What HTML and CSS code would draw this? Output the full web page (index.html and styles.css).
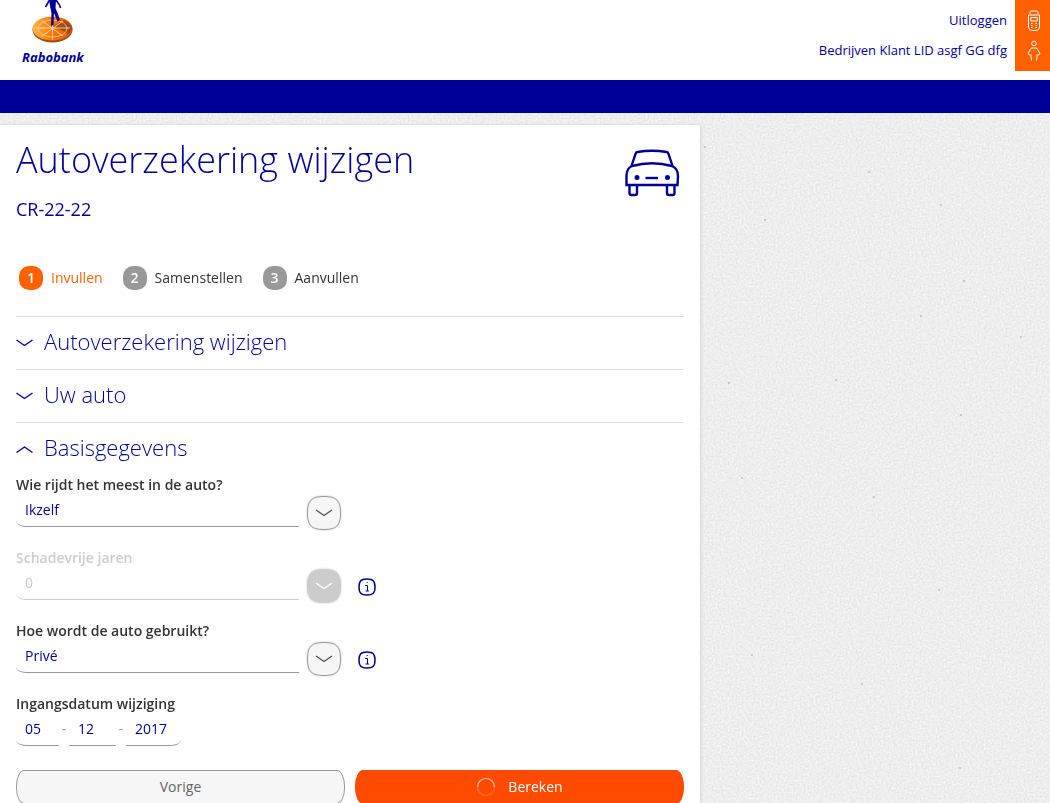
FILE: index.html
```html
<!DOCTYPE html>
<html lang="nl">
<head>
<meta charset="utf-8">
<meta name="viewport" content="width=device-width, initial-scale=1">
<title>Autoverzekering wijzigen - Rabobank</title>
<link rel="stylesheet" href="styles.css">
</head>
<body>
<svg class="paper" aria-hidden="true">
  <filter id="grain" x="0" y="0" width="100%" height="100%" color-interpolation-filters="sRGB">
    <feTurbulence type="fractalNoise" baseFrequency="0.5" numOctaves="3" seed="4"/>
    <feColorMatrix values="0.12 0 0 0 0.873  0.12 0 0 0 0.873  0.12 0 0 0 0.873  0 0 0 0 1"/>
  </filter>
  <rect width="100%" height="100%" filter="url(#grain)"/>
  <g class="specks">
    <circle cx="705" cy="147" r="1"/><circle cx="869" cy="172" r="1"/><circle cx="941" cy="205" r="1"/><circle cx="765" cy="220" r="1"/><circle cx="964" cy="281" r="1"/><circle cx="1021" cy="337" r="1"/><circle cx="921" cy="316" r="1"/><circle cx="729" cy="383" r="1"/><circle cx="836" cy="380" r="1"/><circle cx="961" cy="415" r="1"/><circle cx="742" cy="478" r="1"/><circle cx="874" cy="497" r="1"/><circle cx="939" cy="590" r="1"/><circle cx="862" cy="684" r="1"/><circle cx="960" cy="768" r="1"/><circle cx="752" cy="655" r="1"/>
  </g>
</svg>

<header class="header">
  <a class="logo" href="#" aria-label="Rabobank">
    <svg class="logo-mark" viewBox="0 0 42 44" aria-hidden="true">
      <defs><linearGradient id="disc"><stop offset="0" stop-color="#ffb84d"/><stop offset=".45" stop-color="#ff7a00"/><stop offset="1" stop-color="#d95a10"/></linearGradient></defs>
      <ellipse cx="20.500" cy="30" rx="20" ry="12.500" fill="#a04a18"/>
      <ellipse cx="20.500" cy="28.500" rx="20" ry="12" fill="url(#disc)"/>
      <path d="M21 26L32 20Q40 24 40 29L37 34Z" fill="#8a3d14" opacity=".7"/>
      <ellipse cx="20.500" cy="28.500" rx="14.500" ry="8.500" fill="none" stroke="#ffe0b0" stroke-width=".7"/>
      <path d="M20.500 17V40M4 28H38M10 21L31 36M31 21L10 36" stroke="#ffe6c4" stroke-width=".8"/>
      <path d="M17 0H24L23.500 8L26 14L28 20L25.500 21.500L22 13L21.500 25L19 26L19.500 13L18 6Z" fill="#009"/>
      <path d="M17.500 0L13.500 7M24 0L27.500 5L28.500 8" fill="none" stroke="#009" stroke-width="1.600"/>
    </svg>
    <span class="logo-name">Rabobank</span>
  </a>
  <div class="account">
    <nav class="account-links" aria-label="Account">
      <a href="#">Uitloggen</a>
      <a href="#">Bedrijven Klant LID asgf GG dfg</a>
    </nav>
    <div class="account-icons">
      <svg viewBox="0 0 14 22" aria-hidden="true"><path d="M3 4V2.500Q3 1 4.500 1H9.500Q11 1 11 2.500V4M1.500 5H12.500V17Q12.500 20.500 9 20.500H5Q1.500 20.500 1.500 17ZM3.800 7.500H10.200V11H3.800Z"/><path d="M4 13.500H5.600M8.400 13.500H10M4 15.500H5.600M8.400 15.500H10M4 17.500H5.600M8.400 17.500H10"/></svg>
      <svg viewBox="0 0 14 22" aria-hidden="true"><circle cx="7" cy="3.500" r="2.300"/><path d="M3.500 15H2.300L1.200 13.500L3.300 9.500Q3.900 8 5 8H9Q10.100 8 10.700 9.500L12.800 13.500L11.700 15H10.500M4 14.500V17L4.500 20.500M10 14.500V17L9.500 20.500"/></svg>
    </div>
  </div>
</header>
<div class="navbar"></div>

<main class="panel">
  <div class="title-row">
    <div>
      <h1>Autoverzekering wijzigen</h1>
      <p class="policy">CR-22-22</p>
    </div>
    <svg class="car" viewBox="0 0 56 48" aria-hidden="true">
      <path d="M7.500 17L11.500 4.800Q12 3.300 13.500 3Q28 .5 42.500 3Q44 3.300 44.500 4.800L48.500 17"/>
      <path d="M2.500 36V27Q2.500 19.500 8 17Q28 11.500 48 17Q54 19.500 54 27L53.500 36Z"/>
      <path d="M5.500 36V44Q5.500 46 7.500 46H11Q13 46 13 44V36M43 36V44Q43 46 45 46H48.500Q50.500 46 50.500 44V36"/>
      <path d="M21.500 29H34"/>
      <circle cx="13" cy="28.500" r="2.500"/><circle cx="43.500" cy="28.500" r="2.500"/>
    </svg>
  </div>

  <ol class="steps">
    <li class="step active"><span class="badge">1</span>Invullen</li>
    <li class="step"><span class="badge">2</span>Samenstellen</li>
    <li class="step"><span class="badge">3</span>Aanvullen</li>
  </ol>

  <h2><button class="section" type="button" aria-expanded="false"><svg class="chevron" viewBox="0 0 17 10" aria-hidden="true"><path d="M.5 2L8.500 7.500L16.500 2"/></svg><span>Autoverzekering wijzigen</span></button></h2>
  <h2><button class="section" type="button" aria-expanded="false"><svg class="chevron" viewBox="0 0 17 10" aria-hidden="true"><path d="M.5 2L8.500 7.500L16.500 2"/></svg><span>Uw auto</span></button></h2>
  <h2><button class="section" type="button" aria-expanded="true"><svg class="chevron" viewBox="0 0 17 10" aria-hidden="true"><path d="M.5 8.500L8.500 3L16.500 8.500"/></svg><span>Basisgegevens</span></button></h2>

  <form class="form">
    <div class="field">
      <label for="driver">Wie rijdt het meest in de auto?</label>
      <div class="control">
        <select id="driver"><option>Ikzelf</option></select>
        <button class="drop" type="button" aria-label="Toon opties"><svg viewBox="0 0 36 36" aria-hidden="true"><path class="face" d="M18 1.500C30.500 1.500 34.500 5.500 34.500 18S30.500 34.500 18 34.500S1.500 30.500 1.500 18S5.500 1.500 18 1.500Z"/><path class="mark" d="M10 15L18 20.500L26 15"/></svg></button>
      </div>
    </div>
    <div class="field disabled">
      <label for="years">Schadevrije jaren</label>
      <div class="control">
        <select id="years" disabled><option>0</option></select>
        <button class="drop" type="button" aria-label="Toon opties" disabled><svg viewBox="0 0 36 36" aria-hidden="true"><path class="face" d="M18 1.500C30.500 1.500 34.500 5.500 34.500 18S30.500 34.500 18 34.500S1.500 30.500 1.500 18S5.500 1.500 18 1.500Z"/><path class="mark" d="M10 15L18 20.500L26 15"/></svg></button>
        <button class="info" type="button" aria-label="Informatie"><svg viewBox="0 0 18 18" aria-hidden="true"><path class="ring" d="M9 1C15 1 17 3 17 9S15 17 9 17S1 15 1 9S3 1 9 1Z"/><path d="M7 7.500H9.500V13M7.500 13H11M8.700 4.500H9.700"/></svg></button>
      </div>
    </div>
    <div class="field">
      <label for="usage">Hoe wordt de auto gebruikt?</label>
      <div class="control">
        <select id="usage"><option>Privé</option></select>
        <button class="drop" type="button" aria-label="Toon opties"><svg viewBox="0 0 36 36" aria-hidden="true"><path class="face" d="M18 1.500C30.500 1.500 34.500 5.500 34.500 18S30.500 34.500 18 34.500S1.500 30.500 1.500 18S5.500 1.500 18 1.500Z"/><path class="mark" d="M10 15L18 20.500L26 15"/></svg></button>
        <button class="info" type="button" aria-label="Informatie"><svg viewBox="0 0 18 18" aria-hidden="true"><path class="ring" d="M9 1C15 1 17 3 17 9S15 17 9 17S1 15 1 9S3 1 9 1Z"/><path d="M7 7.500H9.500V13M7.500 13H11M8.700 4.500H9.700"/></svg></button>
      </div>
    </div>
    <div class="field">
      <label for="day">Ingangsdatum wijziging</label>
      <div class="date">
        <input class="day" id="day" value="05"><span class="dash">-</span>
        <input class="month" aria-label="Maand" value="12"><span class="dash">-</span>
        <input class="year" aria-label="Jaar" value="2017">
      </div>
    </div>
    <div class="actions">
      <button class="action" type="button">Vorige</button>
      <button class="action primary" type="submit"><svg class="spinner" viewBox="0 0 20 20" aria-hidden="true"><circle cx="10" cy="10" r="8.500" opacity=".3"/><path d="M1.500 10A8.500 8.500 0 0 1 18.500 10"/></svg>Bereken</button>
    </div>
  </form>
</main>
</body>
</html>
```
FILE: styles.css
```css
* { box-sizing: border-box; }

body {
  margin: 0;
  background: #eee;
  color: #333;
  font: 14px/20px "Open Sans", "Noto Sans", sans-serif;
}

button, input, select { font: inherit; }
a { color: #009; text-decoration: none; }

.paper {
  position: fixed;
  inset: 0;
  z-index: -1;
  width: 100%;
  height: 100%;
}
.specks { fill: #999; opacity: .6; }

.header {
  display: flex;
  justify-content: space-between;
  height: 80px;
  background: #fff;
}
.logo {
  display: flex;
  flex-direction: column;
  align-items: center;
  margin-left: 22px;
}
.logo-mark { width: 42px; height: 44px; }
.logo-name {
  margin-top: 4px;
  font: italic bold 13px/18px "Open Sans", sans-serif;
}
.account { display: flex; gap: 8px; }
.account-links {
  display: flex;
  flex-direction: column;
  gap: 10px;
  padding-top: 10px;
  font-size: 13px;
  text-align: right;
}
.account-icons {
  display: flex;
  flex-direction: column;
  align-items: center;
  gap: 8px;
  width: 35px;
  height: 71px;
  padding: 10px 0 0 3px;
  background: #ff6000;
}
.account-icons svg {
  width: 14px;
  height: 22px;
  fill: none;
  stroke: #fff;
}

.navbar { height: 33px; background: #009; }

.panel {
  width: 66.667%;
  margin-top: 12px;
  padding: 12px 16px 16px;
  background: #fff;
  box-shadow: 1px 0 3px #d4d4d4;
}
.title-row { display: flex; justify-content: space-between; }
h1 {
  margin: 0;
  color: #009;
  font: 300 36px/45px "Open Sans", sans-serif;
}
.policy {
  margin: 15px 0 0;
  color: #009;
  font-size: 18px;
  line-height: 24px;
}
.car {
  width: 56px;
  height: 48px;
  margin: 12px 4px 0 0;
  fill: none;
  stroke: #009;
  stroke-width: 2.4;
}
.car circle { fill: #009; stroke: none; }

.steps {
  display: flex;
  gap: 20px;
  margin: 45px 0 26px;
  padding: 0 0 0 3px;
  list-style: none;
}
.step { display: flex; align-items: center; gap: 8px; }
.badge {
  width: 24px;
  height: 24px;
  border-radius: 10px;
  background: #999;
  color: #fff;
  font-weight: 600;
  line-height: 24px;
  text-align: center;
}
.active { color: #ff6000; }
.active .badge { background: #ff6000; }

h2 { margin: 0; border-top: 1px solid #ddd; }
.section {
  display: flex;
  align-items: center;
  gap: 11px;
  width: 100%;
  height: 52px;
  padding: 0;
  border: 0;
  background: none;
  color: #009;
  font-size: 22px;
  font-weight: 300;
}
.section span { padding-bottom: 4px; }
.chevron {
  width: 17px;
  height: 10px;
  fill: none;
  stroke: currentColor;
  stroke-width: 1.4;
}

.field { height: 73px; }
label { display: block; font-weight: 600; }
.control { display: flex; }
select, input {
  height: 32px;
  padding: 0 9px 2px;
  border: 0;
  border-bottom: 1px solid #999;
  border-radius: 0;
  outline: 0;
  background: transparent;
  color: #009;
  appearance: none;
}
select { width: 283px; border-bottom-left-radius: 10px 6px; }
.drop {
  width: 36px;
  height: 36px;
  margin-left: 7px;
  padding: 0;
  border: 0;
  background: none;
}
.drop svg {
  display: block;
  fill: none;
  filter: drop-shadow(0 0 1px #ccc);
}
.face { fill: #f6f6f6; stroke: #999; }
.mark { stroke: #555; stroke-width: 1.4; }
.info {
  width: 18px;
  height: 18px;
  margin: 10px 0 0 16px;
  padding: 0;
  border: 0;
  background: none;
}
.info svg {
  display: block;
  fill: none;
  stroke: #009;
}
.info .ring { stroke-width: 1.5; }
.disabled label { color: #ccc; }
.disabled select { border-color: #ccc; color: #ccc; opacity: 1; }
.disabled .face { fill: #ccc; stroke: #ccc; }
.disabled .mark { stroke: #fff; }

.date { display: flex; }
.dash { width: 10px; color: #999; line-height: 30px; text-align: center; }
.day { width: 43px; border-bottom-left-radius: 10px 6px; }
.month { width: 47px; }
.year { width: 55px; border-bottom-right-radius: 10px 6px; }

.actions { display: flex; gap: 10px; margin-top: 3px; }
.action {
  display: flex;
  flex: 1;
  align-items: center;
  justify-content: center;
  gap: 12px;
  height: 34px;
  border: 1px solid #999;
  border-radius: 8px / 16px;
  background: #f6f6f6;
  color: #666;
}
.primary { border-color: #ff4b00; background: #ff4b00; color: #fff; }
.spinner {
  width: 20px;
  height: 20px;
  fill: none;
  stroke: #ffc0a0;
  stroke-width: 1.2;
}
```
